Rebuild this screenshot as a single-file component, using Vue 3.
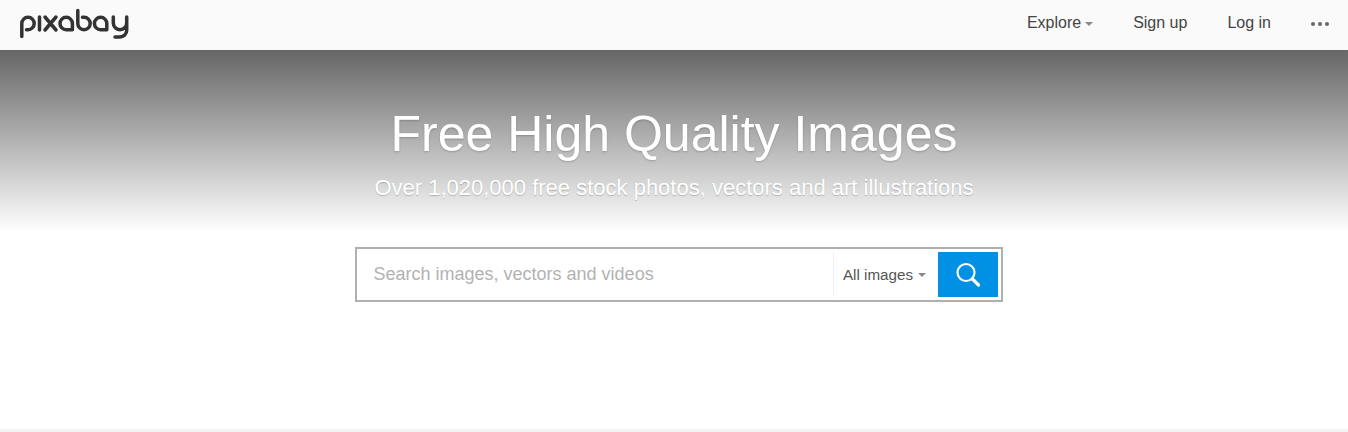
<script setup>
const links = ['Sign up', 'Log in']
</script>

<template>
  <div class="page">
    <header class="topbar">
      <svg class="logo" width="112" height="36" viewBox="19 7 112 36" role="img" aria-label="pixabay">
        <g fill="none" stroke="#333" stroke-width="3.500" stroke-linecap="round" stroke-linejoin="round">
          <path d="M21.800 36.500V23.500a6.200 6.200 0 1 1 6.200 6.200H26.500" />
          <path d="M39.500 17V30" />
          <path d="M45 17L56 30M56 17L45 30" />
          <path d="M72.400 29.700H66.200a6.200 6.200 0 1 1 6.200-6.200V29.700" />
          <path d="M77.800 10.500V23.500a6.200 6.200 0 1 0 6.200-6.200H82.500" />
          <path d="M106.800 29.700H100.600a6.200 6.200 0 1 1 6.200-6.200V29.700" />
          <path d="M113.300 17V23a6.700 6.700 0 0 0 13.400 0V17M126.700 23V30.300a6.700 6.700 0 0 1-6.700 6.700H115" />
        </g>
      </svg>
      <nav class="nav">
        <a class="nav-item">Explore<span class="caret"></span></a>
        <a v-for="link in links" :key="link" class="nav-item">{{ link }}</a>
        <span class="dots"><i></i><i></i><i></i></span>
      </nav>
    </header>
    <section class="hero">
      <h1>Free High Quality Images</h1>
      <p>Over 1,020,000 free stock photos, vectors and art illustrations</p>
    </section>
    <form class="search" @submit.prevent>
      <span class="placeholder">Search images, vectors and videos</span>
      <span class="media">All images<span class="caret"></span></span>
      <button class="go" type="button" aria-label="Search">
        <svg width="26" height="26" viewBox="0 0 26 26" fill="none" stroke="#fff" stroke-linecap="round">
          <circle cx="11" cy="10.500" r="8.500" stroke-width="2.200" />
          <path d="M17.500 17l6 6" stroke-width="3.200" />
        </svg>
      </button>
    </form>
    <div class="spacer"></div>
    <div class="foot"></div>
  </div>
</template>

<style>
html, body { margin: 0; background: #fff; }
</style>

<style scoped>
.page {
  height: 432px;
  display: flex;
  flex-direction: column;
  overflow: hidden;
  font-family: "Liberation Sans", Arial, sans-serif;
  background: #fff;
}
.topbar {
  height: 50px;
  flex: none;
  display: flex;
  align-items: center;
  justify-content: space-between;
  padding: 0 19px;
  background: #fafafa;
  box-sizing: border-box;
}
.logo { display: block; }
.nav { display: flex; align-items: center; gap: 40px; margin-bottom: 4px; }
.nav-item { font-size: 16px; color: #444; display: flex; align-items: center; }
.nav-item .caret { margin-left: 4px; }
.caret {
  display: inline-block;
  width: 0;
  height: 0;
  margin-left: 5px;
  margin-top: 1px;
  border-left: 4px solid transparent;
  border-right: 4px solid transparent;
  border-top: 4px solid #888;
}
.dots { display: flex; gap: 3px; margin-top: 1px; }
.dots i { display: block; width: 4px; height: 4px; border-radius: 50%; background: #666; }
.hero {
  height: 182px;
  flex: none;
  box-sizing: border-box;
  padding-top: 54px;
  text-align: center;
  color: #fff;
  background: linear-gradient(#666 0%, #fff 100%);
}
.hero h1 {
  margin: 0;
  font-size: 50px;
  line-height: 60px;
  font-weight: 400;
  text-shadow: 0 1px 2px rgba(0, 0, 0, .2);
}
.hero p {
  margin: 11px 0 0;
  font-size: 22px;
  line-height: 26px;
  text-shadow: 0 1px 1px rgba(0, 0, 0, .2);
}
.search {
  width: 648px;
  height: 55px;
  flex: none;
  box-sizing: border-box;
  margin: 15px 0 0 355px;
  border: 2px solid #b0b0b0;
  display: flex;
  align-items: center;
  padding-right: 3px;
  background: #fff;
}
.placeholder { flex: 1; padding-left: 16.500px; font-size: 18px; color: #b2b2b2; }
.media {
  align-self: stretch;
  margin: 3px 0;
  padding: 0 12px 0 9px;
  display: flex;
  align-items: center;
  border-left: 1px solid #f0f0f0;
  font-size: 15.200px;
  color: #555;
}
.go {
  width: 60px;
  height: 45px;
  border: 0;
  padding: 0;
  background: #0091e5;
  display: flex;
  align-items: center;
  justify-content: center;
}
.spacer { flex: 1; }
.foot { height: 3px; flex: none; background: #f2f2f2; }
</style>
